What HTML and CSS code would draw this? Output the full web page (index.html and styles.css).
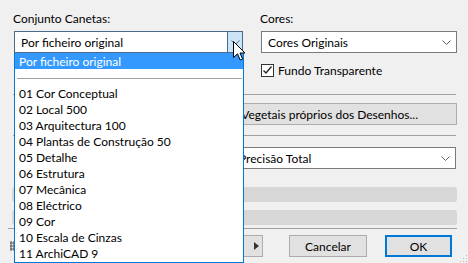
FILE: index.html
```html
<!DOCTYPE html>
<html lang="pt">
<head>
  <meta charset="UTF-8">
  <title>Opções de Impressão</title>
  <link rel="stylesheet" href="styles.css">
</head>
<body>

  <div class="dialog">

    <!-- Top row: pen set and colours -->
    <div class="top-row">
      <div class="field">
        <label class="field-label">Conjunto Canetas:</label>
        <div class="combo combo-open">
          <span class="combo-text">Por ficheiro original</span>
          <span class="combo-btn">
            <svg width="9" height="5" viewBox="0 0 9 5"><path d="M0.5 0.5 L4.5 4.5 L8.5 0.5" fill="none" stroke="#5a6a7a" stroke-width="1"/></svg>
          </span>
        </div>
      </div>

      <div class="field">
        <label class="field-label">Cores:</label>
        <div class="combo">
          <span class="combo-text">Cores Originais</span>
          <svg class="chevron" width="9" height="5" viewBox="0 0 9 5"><path d="M0.5 0.5 L4.5 4.5 L8.5 0.5" fill="none" stroke="#606060" stroke-width="1"/></svg>
        </div>
        <label class="check">
          <span class="check-box">
            <svg width="11" height="11" viewBox="0 0 11 11"><path d="M1.5 5.5 L4 8 L9.5 1.5" fill="none" stroke="#222" stroke-width="1.3"/></svg>
          </span>
          Fundo Transparente
        </label>
      </div>
    </div>

    <div class="sep"></div>

    <div class="wide-row">
      <button class="btn wide-btn">Vegetais próprios dos Desenhos...</button>
    </div>

    <div class="sep"></div>

    <div class="precision-row">
      <div class="combo">
        <span class="combo-text">Precisão Total</span>
        <svg class="chevron" width="9" height="5" viewBox="0 0 9 5"><path d="M0.5 0.5 L4.5 4.5 L8.5 0.5" fill="none" stroke="#606060" stroke-width="1"/></svg>
      </div>
    </div>

    <div class="bars">
      <div class="bar"></div>
      <div class="bar"></div>
    </div>

    <div class="sep sep-bottom"></div>

    <div class="footer">
      <span class="foot-icon">
        <svg width="6" height="12" viewBox="0 0 6 12"><path d="M1 1 V11 M4 1 V11 M0 3 H6 M0 6 H6 M0 9 H6" fill="none" stroke="#555" stroke-width="1"/></svg>
      </span>
      <button class="btn small-btn">
        <svg width="5" height="8" viewBox="0 0 5 8"><path d="M0 0 L5 4 L0 8 Z" fill="#333"/></svg>
      </button>
      <button class="btn action-btn">Cancelar</button>
      <button class="btn action-btn default-btn">OK</button>
    </div>

    <!-- Open dropdown of the pen set combo -->
    <ul class="dropdown-list">
      <li class="selected">Por ficheiro original</li>
      <li class="divider"><span></span></li>
      <li>01 Cor Conceptual</li>
      <li>02 Local 500</li>
      <li>03 Arquitectura 100</li>
      <li>04 Plantas de Construção 50</li>
      <li>05 Detalhe</li>
      <li>06 Estrutura</li>
      <li>07 Mecânica</li>
      <li>08 Eléctrico</li>
      <li>09 Cor</li>
      <li>10 Escala de Cinzas</li>
      <li>11 ArchiCAD 9</li>
    </ul>

    <svg class="cursor" width="13" height="21" viewBox="0 0 13 21">
      <path d="M0.5 0.5 L0.5 16.5 L4.5 12.8 L7.2 19 L9.6 18 L7 12 L12 12 Z" fill="#fff" stroke="#000" stroke-width="1" stroke-linejoin="miter"/>
    </svg>

    <div class="grip"></div>
  </div>

</body>
</html>
```

FILE: styles.css
```css
* {
  box-sizing: border-box;
}

html, body {
  margin: 0;
  width: 468px;
  height: 263px;
  overflow: hidden;
}

body {
  background-color: #f0f0f0;
  font-family: "Segoe UI", Lato, "Noto Sans", sans-serif;
  font-size: 12px;
  color: #000;
}

.dialog {
  position: relative;
  width: 468px;
  height: 263px;
  padding: 10px 11px 0 14px;
}

.top-row {
  display: grid;
  grid-template-columns: 229px 196px;
  column-gap: 18px;
}

.field-label {
  display: block;
  line-height: 16px;
  height: 16px;
  padding-top: 1px;
  margin: 0 0 5px -1px;
}

.combo {
  display: flex;
  align-items: center;
  height: 22px;
  background-color: #fff;
  border: 1px solid #7a7a7a;
  padding-left: 6px;
}

.combo-text {
  flex: 1;
  white-space: nowrap;
  overflow: hidden;
  padding-top: 1px;
}

.chevron {
  margin-right: 5px;
}

.combo-open {
  border-color: #4d6a88;
  padding-right: 0;
}

.combo-btn {
  display: flex;
  align-items: center;
  justify-content: center;
  width: 15px;
  height: 20px;
  background-color: #cce4f7;
  border-left: 1px solid #4d6a88;
}

.check {
  display: flex;
  align-items: center;
  gap: 4px;
  margin-top: 11px;
  height: 13px;
  line-height: 13px;
}

.check-box {
  display: flex;
  align-items: center;
  justify-content: center;
  width: 13px;
  height: 13px;
  background-color: #fff;
  border: 1px solid #333;
}

.sep {
  height: 1px;
  background-color: #a0a0a0;
  margin: 17px 1px 0 -1px;
}

.wide-row {
  margin-top: 8px;
}

.btn {
  font-family: inherit;
  font-size: 12px;
  color: #000;
  background-color: #e1e1e1;
  border: 1px solid #adadad;
  height: 22px;
  padding: 0;
  margin: 0;
}

.wide-btn {
  display: block;
  width: 442px;
  margin-left: 1px;
  text-align: right;
  padding: 1px 38px 0 0;
  white-space: nowrap;
}

.wide-row + .sep {
  margin-top: 10px;
}

.precision-row {
  display: flex;
  justify-content: flex-end;
  margin-top: 11px;
  padding-right: 1px;
}

.precision-row .combo {
  width: 224px;
}

.bars {
  display: flex;
  flex-direction: column;
  gap: 8px;
  margin: 18px 0 0 -2px;
}

.bar {
  height: 15px;
  background-color: #d7d7d7;
  border-radius: 3px;
}

.sep-bottom {
  margin: 3px 0 0 -6px;
}

.footer {
  display: flex;
  align-items: center;
  margin-top: 6px;
  padding-right: 5px;
}

.foot-icon {
  margin: 0 auto 0 -4px;
  display: flex;
}

.small-btn {
  width: 40px;
  display: flex;
  align-items: center;
  justify-content: flex-end;
  padding-right: 3px;
}

.action-btn {
  width: 78px;
  margin-left: 26px;
  padding-top: 1px;
}

.default-btn {
  width: 67px;
  margin-left: 18px;
  border: 2px solid #0078d7;
}

.dropdown-list {
  position: absolute;
  left: 14px;
  top: 53px;
  width: 230px;
  height: 210px;
  margin: 0;
  padding: 0;
  list-style: none;
  background-color: #fff;
  border: 1px solid #0078d7;
  border-top: none;
}

.dropdown-list li {
  height: 16px;
  line-height: 16px;
  padding: 1px 0 0 4px;
  white-space: nowrap;
}

.dropdown-list li.selected {
  background-color: #3399ff;
  color: #fff;
}

.dropdown-list li.divider {
  display: flex;
  align-items: center;
  padding: 0 1px 0 2px;
}

.divider span {
  display: block;
  width: 100%;
  height: 1px;
  background-color: #a0a0a0;
  margin-top: 2px;
}

.cursor {
  position: absolute;
  left: 233px;
  top: 41px;
}

.grip {
  position: absolute;
  right: 1px;
  bottom: 1px;
  width: 8px;
  height: 8px;
  background-image: radial-gradient(circle, #b8b8b8 0.8px, transparent 1px);
  background-size: 3px 3px;
  clip-path: polygon(100% 0, 100% 100%, 0 100%);
}
```
